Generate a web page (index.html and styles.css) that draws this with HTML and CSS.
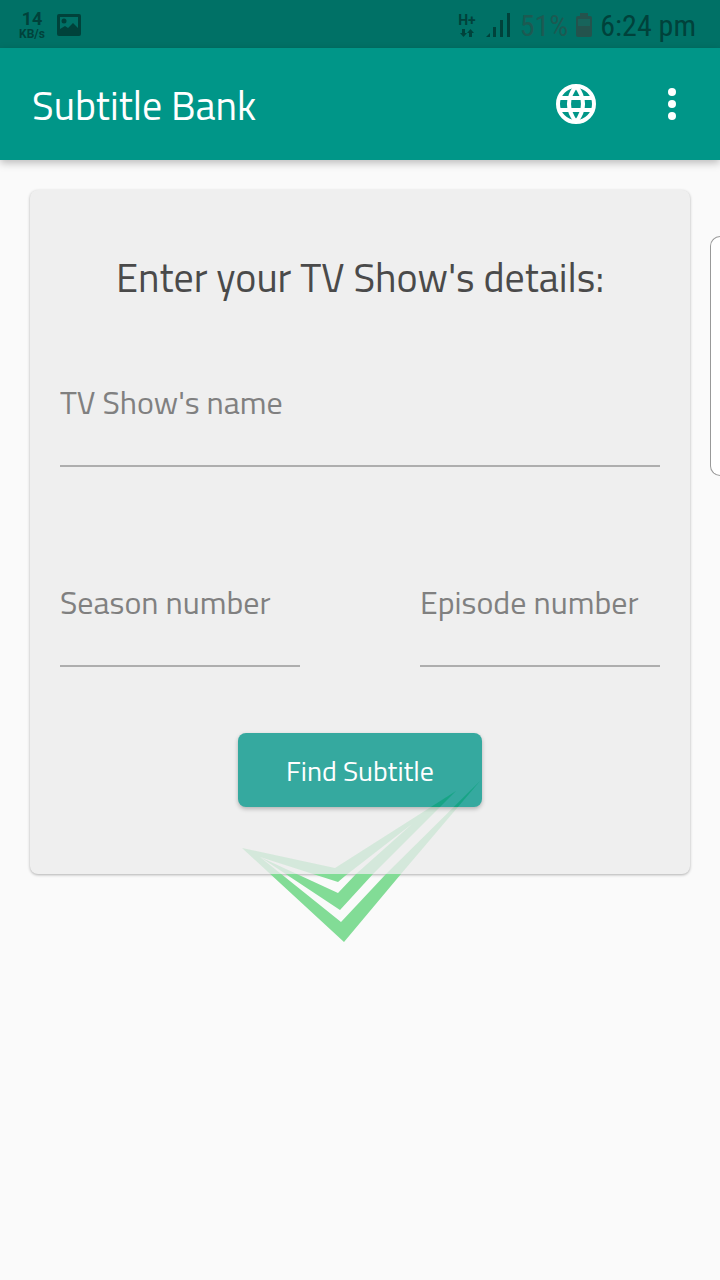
FILE: index.html
```html
<!DOCTYPE html>
<html lang="en">
<head>
<meta charset="utf-8">
<meta name="viewport" content="width=device-width, initial-scale=1">
<title>Subtitle Bank</title>
<link rel="stylesheet" href="styles.css">
</head>
<body>
<div class="status">
  <div class="speed"><span class="speed-value">14</span><span class="speed-unit">KB/s</span></div>
  <svg class="picture" viewBox="0 0 24 22" width="24" height="22"><path fill-rule="evenodd" d="M2 0h20q2 0 2 2v18q0 2-2 2H2q-2 0-2-2V2Q0 0 2 0zM3 3v12l5-3 3 2 5-5 5 5V3z"/><circle cx="7" cy="7" r="2.500"/></svg>
  <div class="network"><span>H+</span><svg viewBox="0 0 16 8" width="16" height="8"><path d="M3 0h3v4h2L4.500 8 1 4h2zM10 8h3V4h2l-3.500-4L8 4h2z"/></svg></div>
  <svg class="signal" viewBox="0 0 24 24" width="24" height="24"><path d="M0 24l4-4v4zM7 14h3v10H7zM14 7h3v17h-3zM21 0h3v24h-3z"/></svg>
  <span class="percent">51%</span>
  <svg class="battery" viewBox="0 0 16 24" width="16" height="24"><path class="battery-shell" d="M4 0h8v3h2q2 0 2 2v17q0 2-2 2H2q-2 0-2-2V5q0-2 2-2h2z"/><path class="battery-empty" d="M2 6h12v7H2z"/></svg>
  <time class="clock">6:24 pm</time>
</div>
<header class="appbar">
  <h1>Subtitle Bank</h1>
  <button class="icon-button" type="button" aria-label="Language"><svg viewBox="0 0 40 40" width="40" height="40" fill="none" stroke="#fff" stroke-width="4"><circle cx="20" cy="20" r="18"/><path d="M3 14h34M3 26h34M20 2Q6 20 20 38M20 2Q34 20 20 38"/></svg></button>
  <button class="icon-button" type="button" aria-label="More options"><svg viewBox="0 0 8 32" width="8" height="32" fill="#fff"><circle cx="4" cy="4" r="4"/><circle cx="4" cy="16" r="4"/><circle cx="4" cy="28" r="4"/></svg></button>
</header>
<main>
  <form class="card">
    <h2>Enter your TV Show's details:</h2>
    <input class="field" type="text" placeholder="TV Show's name" aria-label="TV Show's name">
    <div class="pair">
      <input class="field" type="text" placeholder="Season number" aria-label="Season number">
      <input class="field" type="text" placeholder="Episode number" aria-label="Episode number">
    </div>
    <button class="find" type="button">Find Subtitle</button>
    <svg class="check" viewBox="240 780 242 164" width="242" height="164">
      <defs>
        <clipPath id="button"><path d="M240 780h242v27H240z"/></clipPath>
        <clipPath id="over"><path d="M240 807h242v67H240z"/></clipPath>
        <clipPath id="under"><path d="M240 874h242v70H240z"/></clipPath>
        <path id="mark" d="M242 848L344 942 401 874 480 781 386 874 341 922 260 857 340 910 373 874 456 791 335 868zM260 857L338 882 345 876 412 824 356 874 338 893z" fill-rule="evenodd"/>
      </defs>
      <use href="#mark" class="mark-button" clip-path="url(#button)"/>
      <use href="#mark" class="mark-faint" clip-path="url(#over)"/>
      <use href="#mark" class="mark-strong" clip-path="url(#under)"/>
    </svg>
  </form>
  <div class="edge"></div>
</main>
</body>
</html>
```
FILE: styles.css
```css
* { box-sizing: border-box; }
body { margin: 0; min-height: 100vh; background: #fafafa; font-family: "Titillium Web", Roboto, sans-serif; font-weight: 400; }
h1, h2 { margin: 0; font-weight: 400; font-size: 40px; line-height: 56px; }
.status { display: flex; align-items: center; height: 48px; padding: 2px 24px 0 18px; background: #007166; color: #00423b; fill: #00423b; font-family: Roboto, sans-serif; font-weight: 400; }
.speed { display: flex; flex-direction: column; align-items: center; width: 28px; font-weight: 700; }
.speed-value { font-size: 18px; line-height: 18px; }
.speed-unit { font-size: 12px; line-height: 12px; }
.picture { margin-left: 11px; }
.network { display: flex; flex-direction: column; align-items: center; margin-left: auto; font-size: 14px; line-height: 14px; font-weight: 700; gap: 2px; }
.signal { margin-left: 10px; }
.percent { margin-left: 10px; font-family: "Roboto Condensed", Roboto, sans-serif; font-size: 30px; color: #1c5a52; }
.battery { margin: 0 8px; }
.battery-shell { fill: #24534d; }
.battery-empty { fill: #17645b; }
.clock { font-family: "Roboto Condensed", Roboto, sans-serif; font-size: 30px; }
.appbar { position: relative; display: flex; align-items: center; gap: 40px; height: 112px; padding: 0 20px 0 32px; background: #009688; color: #fff; box-shadow: 0 3px 8px rgba(0,0,0,.25); }
.appbar h1 { flex: 1; padding-top: 4px; }
.icon-button { display: grid; place-items: center; width: 56px; height: 56px; padding: 0; border: 0; background: none; }
main { position: relative; padding: 30px; }
.card { position: relative; display: flex; flex-direction: column; padding: 60px 30px 67px; border-radius: 8px; background: #efefef; box-shadow: 0 1px 3px rgba(0,0,0,.3); }
.card h2 { text-align: center; color: #4a4a4a; }
.field { width: 100%; height: 100px; margin-top: 61px; padding: 0 0 28px; border: 0; border-bottom: 2px solid #aeaeae; border-radius: 0; background: none; color: #4a4a4a; font: inherit; font-size: 32px; outline: 0; }
.field::placeholder { color: #808080; opacity: 1; }
.pair { display: grid; grid-template-columns: 1fr 1fr; gap: 120px; margin-top: 39px; }
.find { align-self: center; width: 244px; height: 74px; margin-top: 66px; padding: 0; border: 0; border-radius: 8px; background: #35a99f; color: #fff; font: inherit; font-size: 28px; box-shadow: 0 2px 4px rgba(0,0,0,.25); }
.check { position: absolute; left: 210px; bottom: -70px; pointer-events: none; }
.mark-button { fill: #0ca37a; opacity: .7; }
.mark-faint { fill: #00b43c; opacity: .11; }
.mark-strong { fill: #82dc96; }
.edge { position: absolute; right: 0; top: 76px; width: 10px; height: 240px; border: 1px solid #999; border-right: 0; border-radius: 12px 0 0 12px; background: #fff; }
```
